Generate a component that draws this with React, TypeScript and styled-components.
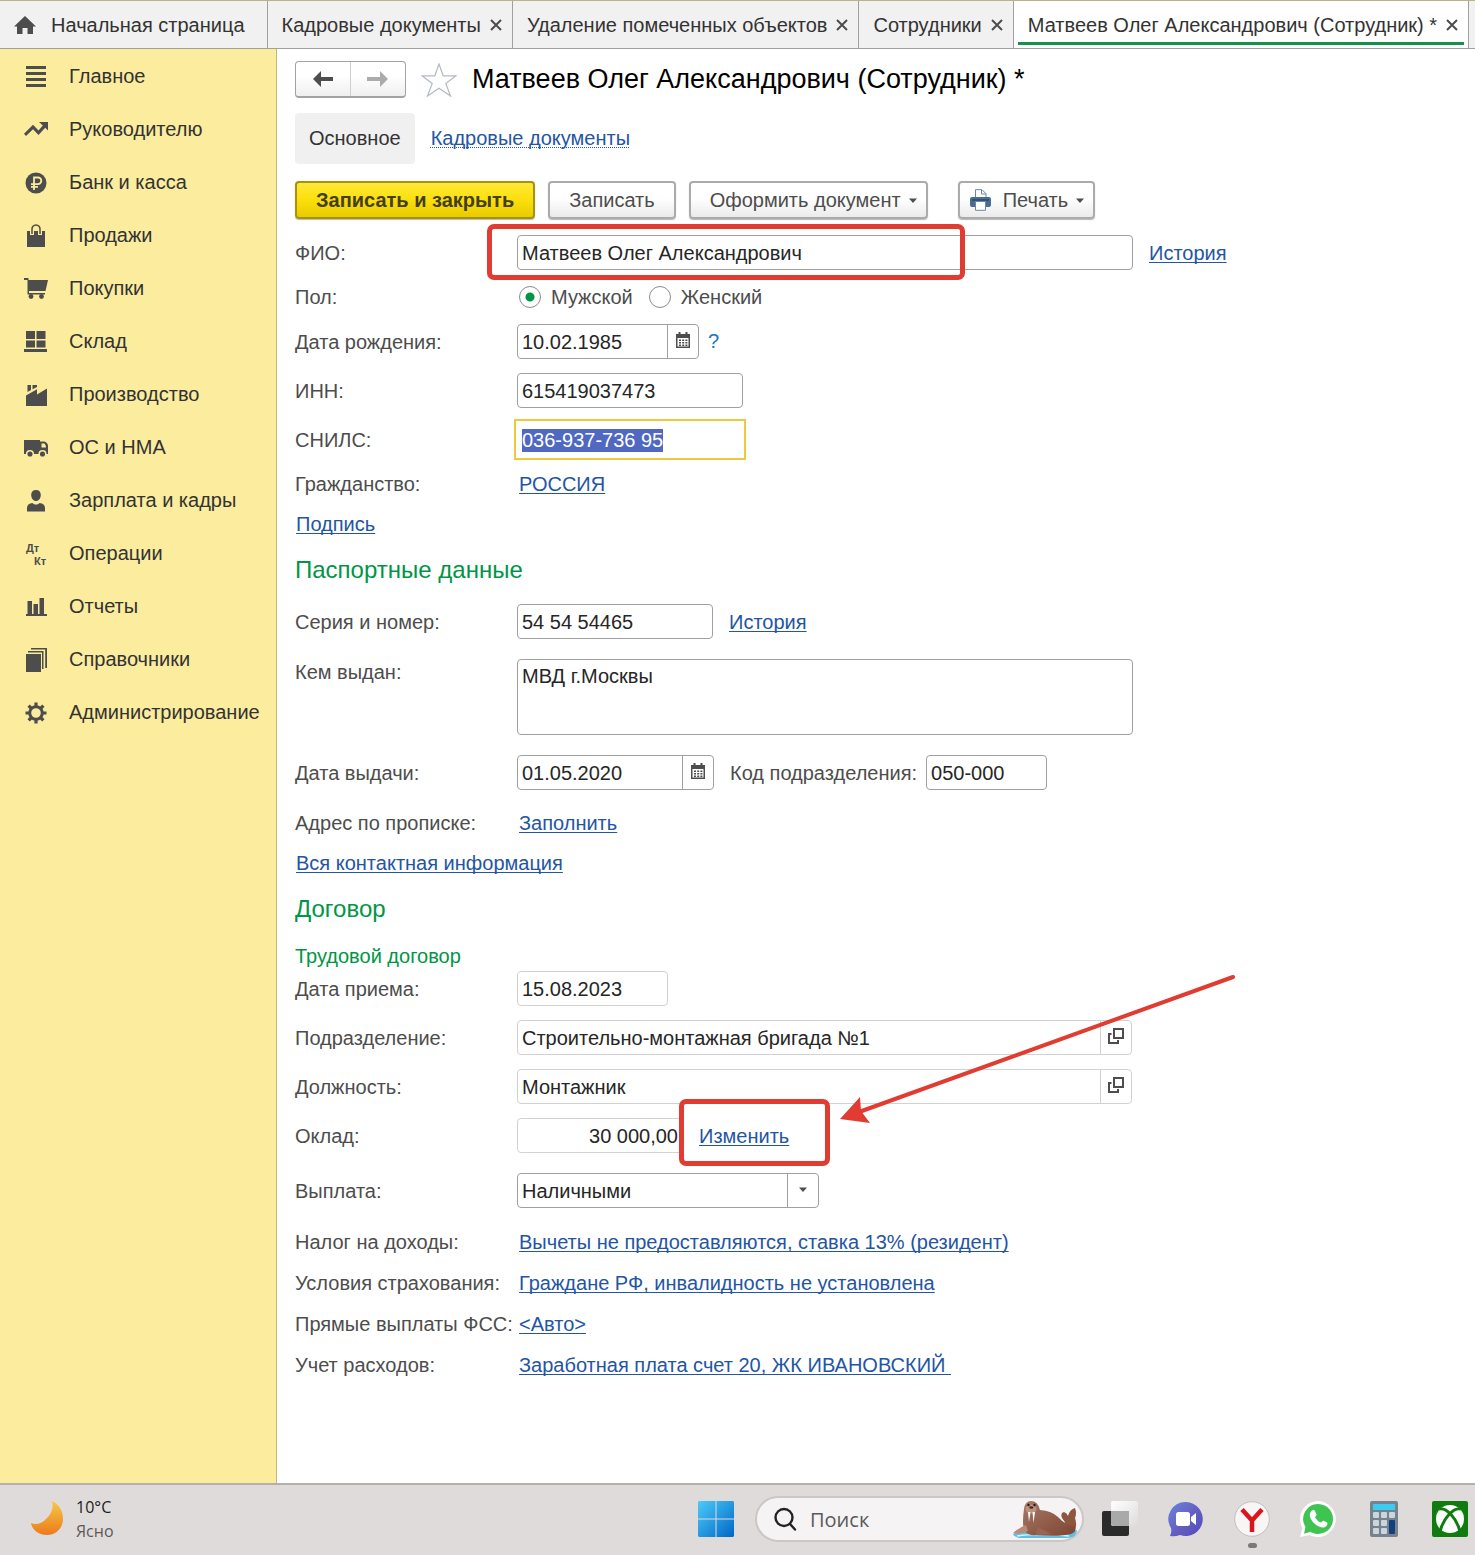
import React, { useEffect, useRef } from "react";
import styled, { createGlobalStyle, css } from "styled-components";

const ink = "#4d4d4d";
const red = "#e03c31";
const green = "#009646";

const GlobalStyle = createGlobalStyle`
  *, *::before, *::after { box-sizing: border-box; }
  body { margin: 0; background: #fff; }
  body, button, input, textarea, select {
    font-family: "Liberation Sans", Arial, sans-serif;
    font-size: 20px;
  }
  svg { display: block; flex: none; }
`;

const Page = styled.div`
  display: flex;
  flex-direction: column;
  min-height: 100vh;
  color: ${ink};
`;

/* ---------- window tabs ---------- */

const TabBar = styled.nav`
  display: flex;
  height: 49px;
  border-top: 1px solid #bdb57c;
  border-bottom: 1px solid #a0a0a0;
  background: #f1f1f1;
  overflow: hidden;
`;

const Tab = styled.div<{ $active?: boolean }>`
  position: relative;
  display: flex;
  align-items: center;
  gap: 9px;
  padding: 1px 10px 0 14px;
  border-right: 1px solid #a0a0a0;
  white-space: nowrap;
  ${(p) =>
    p.$active &&
    css`
      background: #fff;
      &::after {
        content: "";
        position: absolute;
        left: 4px;
        right: 4px;
        bottom: 3px;
        height: 3px;
        background: #15904f;
      }
    `}
`;

const TabLabel = styled.button<{ $home?: boolean }>`
  display: flex;
  align-items: center;
  gap: 15px;
  padding: ${(p) => (p.$home ? "0 12px 0 0" : "0")};
  border: 0;
  background: none;
  color: #333;
  white-space: nowrap;
`;

const TabClose = styled.button`
  padding: 0;
  border: 0;
  background: none;
  color: #444;
`;

/* ---------- sections ---------- */

const Body = styled.div`
  display: flex;
  flex: 1;
`;

const Sidebar = styled.nav`
  flex: none;
  width: 277px;
  padding-top: 1px;
  border-right: 1px solid #c2b878;
  background: #fbec9e;
`;

const SectionLink = styled.a`
  display: flex;
  align-items: center;
  gap: 21px;
  height: 53px;
  padding-left: 24px;
  color: #333;
  text-decoration: none;
`;

/* ---------- main panel ---------- */

const Main = styled.main`
  flex: 1;
  min-width: 0;
  padding: 12px 18px 40px;
`;

const Header = styled.header`
  display: flex;
  align-items: center;
  gap: 15px;
  height: 37px;
`;

const NavPair = styled.div`
  display: flex;
  width: 111px;
  height: 37px;
  border: 1px solid #a3a3a3;
  border-bottom-width: 2px;
  border-radius: 4px;
  background: linear-gradient(#fff 40%, #efefef);
`;

const NavButton = styled.button`
  display: grid;
  flex: 1;
  place-items: center;
  padding: 0;
  border: 0;
  background: none;
  & + & { border-left: 1px solid #cfcfcf; }
`;

const StarButton = styled.button`
  padding: 0;
  border: 0;
  background: none;
`;

const Title = styled.h1`
  margin: 0;
  color: #000;
  font-size: 27px;
  font-weight: 400;
  white-space: nowrap;
`;

const SubTabs = styled.div`
  display: flex;
  align-items: center;
  gap: 16px;
  margin-top: 15px;
`;

const SubTab = styled.button`
  height: 51px;
  padding: 0 14px;
  border: 0;
  border-radius: 4px;
  background: #f0f0f0;
  color: #333;
`;

const Link = styled.a<{ $dotted?: boolean }>`
  color: #2455a4;
  white-space: pre;
  text-decoration: underline ${(p) => (p.$dotted ? "dotted" : "solid")} 1px;
  text-underline-offset: 2px;
  text-decoration-skip-ink: none;
`;

const Toolbar = styled.div`
  display: flex;
  gap: 13px;
  margin-top: 17px;
`;

const Command = styled.button<{ $primary?: boolean; $menu?: boolean; $icon?: boolean; $apart?: boolean }>`
  display: flex;
  align-items: center;
  gap: 8px;
  height: 38px;
  margin-left: ${(p) => (p.$apart ? "17px" : "0")};
  padding: 0 ${(p) => (p.$menu ? "9px" : "19px")} 0 ${(p) => (p.$icon ? "10px" : "19px")};
  border: 2px solid ${(p) => (p.$primary ? "#a6920c" : "#ababab")};
  border-radius: 4px;
  background: ${(p) => (p.$primary ? "linear-gradient(#ffe83a, #fbdf0c 50%, #e8cb00)" : "linear-gradient(#fff 45%, #ebebeb)")};
  box-shadow: 0 1px 1px #b9b9b9;
  color: ${(p) => (p.$primary ? "#443f1a" : ink)};
  font-weight: ${(p) => (p.$primary ? 700 : 400)};
  white-space: nowrap;
  & > svg:first-child { margin-right: 4px; }
`;

/* ---------- form ---------- */

const Form = styled.form`
  display: flex;
  flex-direction: column;
  gap: 14px;
  margin-top: 16px;
`;

const Stack = styled.div<{ $gap: number; $apart?: boolean }>`
  display: flex;
  flex-direction: column;
  gap: ${(p) => p.$gap}px;
  margin-top: ${(p) => (p.$apart ? "7px" : "0")};
`;

const Row = styled.div<{ $apart?: boolean; $top?: boolean }>`
  display: grid;
  grid-template-columns: 222px minmax(0, 1fr);
  align-items: ${(p) => (p.$top ? "start" : "center")};
  margin-top: ${(p) => (p.$apart ? "6px" : "0")};
  line-height: 26px;
`;

const Label = styled.label`
  white-space: nowrap;
`;

const Controls = styled.div<{ $text?: boolean }>`
  display: flex;
  align-items: center;
  gap: 16px;
  padding-left: ${(p) => (p.$text ? "2px" : "0")};
`;

const Line = styled.div`
  padding-left: 1px;
  line-height: 26px;
`;

const Heading = styled.h2`
  margin: 0;
  padding-bottom: 1px;
  color: ${green};
  font-size: 24px;
  font-weight: 400;
  line-height: 38px;
`;

const SubHeading = styled.h3`
  margin: 0;
  color: ${green};
  font-size: 20px;
  font-weight: 400;
  line-height: 26px;
`;

const Field = styled.div<{ $width: number; $quiet?: boolean; $active?: boolean }>`
  position: relative;
  display: flex;
  flex: 0 1 auto;
  width: ${(p) => p.$width}px;
  min-width: 0;
  height: 35px;
  border: 1px solid ${(p) => (p.$active ? "#fff" : p.$quiet ? "#d2d2d2" : "#a0a0a0")};
  border-radius: 4px;
  background: #fff;
  ${(p) => p.$active && "border-radius: 0; outline: 2px solid #ecca3a; outline-offset: 1px;"}
`;

const inputText = css`
  flex: 1;
  min-width: 0;
  border: 0;
  outline: 0;
  background: none;
  color: #262626;
`;

const Input = styled.input<{ $right?: boolean }>`
  ${inputText}
  padding: 2px 4px 0;
  text-align: ${(p) => (p.$right ? "right" : "left")};
  &::selection { background: #5068c0; color: #fff; }
`;

const Select = styled.select`
  ${inputText}
  padding: 0 4px;
  appearance: none;
`;

const TextArea = styled.textarea`
  flex: 0 1 616px;
  min-width: 0;
  height: 76px;
  padding: 3px 4px;
  border: 1px solid #a0a0a0;
  border-radius: 4px;
  color: #262626;
  line-height: 26px;
  resize: none;
`;

const fieldEnd = css`
  display: grid;
  place-items: center;
  flex: none;
  width: 31px;
  padding: 0 0 3px;
  border: 0;
  border-left: 1px solid #a0a0a0;
  background: none;
`;

const FieldButton = styled.button<{ $quiet?: boolean }>`
  ${fieldEnd}
  border-color: ${(p) => (p.$quiet ? "#d2d2d2" : "#a0a0a0")};
`;

const SelectArrow = styled.span`
  ${fieldEnd}
`;

const Choice = styled.label`
  display: flex;
  align-items: center;
  gap: 10px;
`;

const Radio = styled.input`
  appearance: none;
  width: 22px;
  height: 22px;
  margin: 0;
  border: 1px solid #8c8c8c;
  border-radius: 50%;
  background: #fff;
  &:checked { background: radial-gradient(circle, ${green} 4px, #fff 5px); }
`;

const Pair = styled.div`
  display: flex;
  align-items: center;
  gap: 9px;
`;

const Help = styled.button`
  padding: 0;
  border: 0;
  background: none;
  color: #1876bd;
`;

/* ---------- marks drawn over the form ---------- */

const NameMark = styled.span`
  position: absolute;
  left: -31px;
  top: -12px;
  width: 478px;
  height: 56px;
  border: 5px solid ${red};
  border-radius: 7px;
  pointer-events: none;
`;

const Marked = styled.span`
  position: relative;
`;

const LinkMark = styled.span`
  position: absolute;
  left: -20px;
  top: -24px;
  width: 151px;
  height: 67px;
  border: 5px solid ${red};
  border-radius: 7px;
  pointer-events: none;
`;

const Arrow = styled.svg`
  position: absolute;
  left: 140px;
  top: -150px;
  pointer-events: none;
`;

/* ---------- taskbar ---------- */

const Taskbar = styled.footer`
  display: flex;
  align-items: center;
  height: 72px;
  padding: 0 7px 2px 30px;
  border-top: 2px solid #b5b0ae;
  background: #dfdbda;
  font-family: "Open Sans", sans-serif;
`;

const Weather = styled.div`
  display: flex;
  flex: 1;
  align-items: center;
  gap: 12px;
  font-size: 16px;
  line-height: 24px;
`;

const Degrees = styled.div`
  color: #1c1c1c;
`;

const Sky = styled.div`
  color: #5c5a59;
`;

const Search = styled.label`
  display: flex;
  align-items: center;
  gap: 13px;
  width: 329px;
  height: 46px;
  margin: 0 18px 0 21px;
  padding: 0 4px 0 16px;
  border: 2px solid #cbc7c6;
  border-radius: 23px;
  background: #f5f3f4;
`;

const SearchInput = styled.input`
  flex: 1;
  min-width: 0;
  padding: 0;
  border: 0;
  outline: 0;
  background: none;
  font-family: "Open Sans", sans-serif;
  &::placeholder { color: #5a5a5a; opacity: 1; }
`;

const Apps = styled.div`
  display: flex;
  gap: 30px;
`;

const AppButton = styled.button<{ $running?: boolean }>`
  position: relative;
  width: 36px;
  height: 36px;
  padding: 0;
  border: 0;
  background: none;
  ${(p) =>
    p.$running &&
    css`
      &::after {
        content: "";
        position: absolute;
        left: 14px;
        bottom: -11px;
        width: 9px;
        height: 5px;
        border-radius: 3px;
        background: #7b7877;
      }
    `}
`;

/* ---------- drawings ---------- */

const HomeIcon = () => (
  <svg width="22" height="18" viewBox="0 0 22 18" fill={ink}>
    <path d="M11 0 22 10.500h-3V18h-5.500v-6h-5v6H3v-7.500H0z" />
  </svg>
);

const CloseIcon = () => (
  <svg width="12" height="12" viewBox="0 0 12 12" stroke={ink} strokeWidth="2">
    <path d="M1 1l10 10M11 1L1 11" />
  </svg>
);

const sectionArt: Record<string, React.ReactNode> = {
  main: <path d="M2 1h20v3H2zM2 7h20v3H2zM2 13h20v3H2zM2 19h20v3H2z" />,
  chart: <path d="M15 4h9v8.500l-2.800-2.700-6.700 7.200-5.500-5.700L2 18 0 15.700 9 6.800l5.500 5.600 4.300-4.800z" />,
  bank: (
    <>
      <circle cx="12" cy="12" r="10.500" />
      <path d="M10 19V6.500h4a3.300 3.300 0 0 1 0 6.600H7M7 15.800h7" fill="none" stroke="#fbec9e" strokeWidth="1.800" />
    </>
  ),
  bag: (
    <>
      <path d="M3 7h18v16H3z" />
      <path d="M8 11V5a3 3 0 0 1 3-3h2a3 3 0 0 1 3 3v6" fill="none" stroke="#fbec9e" strokeWidth="4" />
      <path d="M8 10V5.500A4 4 0 0 1 12 1a4 4 0 0 1 4 4.500V10" fill="none" stroke={ink} strokeWidth="1.500" />
    </>
  ),
  cart: (
    <>
      <path d="M0 1h4.500v2H24l-2.500 11H5V16h16v1.500H3.500V3H0z" />
      <circle cx="7" cy="19.500" r="2.400" />
      <circle cx="17.500" cy="19.500" r="2.400" />
    </>
  ),
  stock: <path d="M2 1h9v8H2zM12.500 1h9v8h-9zM2 10.500h9v7H2zM12.500 10.500h9v7h-9zM0 19h23v3H0z" />,
  factory: <path d="M2 23V12.500l11-6.200v5.200l10-6V23zM3.500 2h3.500v5L3.500 9zM8.500 2H13v2L8.500 6.200z" />,
  truck: (
    <>
      <path d="M0 4h16v14H0z" />
      <path d="M16 5.500h4.500Q24 7 24 10v8h-8z" />
      <path d="M17.500 7.500h3q1.500 1.500 1.500 4h-4.500z" fill="#fbec9e" />
      <g stroke="#fbec9e" strokeWidth="1.500">
        <circle cx="6" cy="18" r="3.300" />
        <circle cx="18.500" cy="18" r="3.300" />
      </g>
    </>
  ),
  person: <path d="M12 1c3.200 0 5 2.300 4.800 5.200-.200 3-2 5.800-4.800 5.800S7.400 9.200 7.200 6.200C7 3.300 8.800 1 12 1zM3 22.500V19c0-3 2-4.800 5.500-5 2 2 5 2 7 0 3.500.200 5.500 2 5.500 5v3.500z" />,
  ledger: (
    <g fontFamily="Liberation Sans" fontWeight="700" fontSize="11">
      <text x="2" y="10">Дт</text>
      <text x="10" y="23">Кт</text>
    </g>
  ),
  bars: <path d="M2 19h1.500V6H8v13h1.500V9H14v10h1.500V3H20v16h3v2H2z" />,
  books: <path d="M2 6h15v18H2zM4 3h15.500v18H18V4.500H4zM7 0h16v20h-1.800V1.500H7z" />,
  gear: (
    <>
      <circle cx="12" cy="12" r="6.300" fill="none" stroke={ink} strokeWidth="3" />
      <g stroke={ink} strokeWidth="3.200">
        <path d="M12 1.500V5M12 19v3.500M1.500 12H5M19 12h3.500M4.600 4.600L7 7M17 17l2.400 2.400M4.600 19.400L7 17M17 7l2.400-2.400" />
      </g>
    </>
  ),
};

const SectionIcon = ({ name }: { name: string }) => (
  <svg width="24" height="24" viewBox="0 0 24 24" fill={ink}>
    {sectionArt[name]}
  </svg>
);

const ArrowIcon = ({ forward }: { forward?: boolean }) => (
  <svg width="22" height="16" viewBox="0 0 22 16" fill={forward ? "#ababab" : ink}>
    {forward ? <path d="M13 0l8 8-8 8v-6H0V6h13z" /> : <path d="M9 0v6h12v4H9v6L1 8z" />}
  </svg>
);

const StarIcon = () => (
  <svg width="36" height="34" viewBox="0 0 36 34" fill="#fff" stroke="#b5b9c2" strokeWidth="1.200">
    <path d="M18 1l4.200 11.800H35L24.800 20.400 29.500 33 18 25.200 6.500 33l4.700-12.600L1 12.800h12.800z" />
  </svg>
);

const Caret = () => (
  <svg width="8" height="5" viewBox="0 0 8 5" fill={ink}>
    <path d="M0 .500h8L4 5z" />
  </svg>
);

const PrinterIcon = () => (
  <svg width="21" height="22" viewBox="0 0 21 22">
    <path d="M5.500 10V.700h6.500l4 4V10" fill="#fff" stroke="#6b87a8" />
    <path d="M11.500.700V5H16" fill="none" stroke="#6b87a8" />
    <rect y="8" width="21" height="10" rx="2" fill="#4a6c93" />
    <path d="M2 11h17" stroke="#2e4a6d" strokeWidth="1.500" />
    <path d="M5.500 12.500h10v8.800h-10z" fill="#fff" stroke="#6b87a8" />
  </svg>
);

const CalendarIcon = () => (
  <svg width="14" height="16" viewBox="0 0 14 16">
    <path d="M2.500 0h2v2h5V0h2v2H14v14H0V2h2.500z" fill={ink} />
    <path d="M1.500 6h11v8.500h-11z" fill="#fff" />
    <path d="M3 8.200h8.500M3 10.700h8.500M3 13.200h8.500" stroke={ink} strokeWidth="1.500" strokeDasharray="2 1.200" />
  </svg>
);

const OpenIcon = () => (
  <svg width="16" height="16" viewBox="0 0 16 16" fill="none" stroke={ink} strokeWidth="2">
    <path d="M6 1h9v9H6zM3.500 6H1v9h9v-3" />
  </svg>
);

const MoonIcon = () => (
  <svg width="34" height="36" viewBox="0 0 34 36">
    <defs>
      <linearGradient id="moon" x1="0" y1="0" x2="0" y2="1">
        <stop offset="0" stopColor="#f6c945" />
        <stop offset="1" stopColor="#ec7a1c" />
      </linearGradient>
    </defs>
    <path d="M22 0C29 3 33 10 33 18c0 9-7 16-16 16C9 34 2 29 1 22c4 2 10 1 14-3 6-5 9-12 7-19z" fill="url(#moon)" />
  </svg>
);

const WindowsIcon = () => (
  <svg width="36" height="36" viewBox="0 0 36 36">
    <defs>
      <linearGradient id="win" x1="0" y1="0" x2="1" y2="1">
        <stop offset="0" stopColor="#4ccbfa" />
        <stop offset="1" stopColor="#0067c5" />
      </linearGradient>
    </defs>
    <path d="M1 0h16.500v17.500H0V1zM18.500 0H35l1 1v16.500H18.500zM0 18.500h17.500V36H1l-1-1zM18.500 18.500H36V35l-1 1H18.500z" fill="url(#win)" />
  </svg>
);

const SearchIcon = () => (
  <svg width="24" height="24" viewBox="0 0 24 24" fill="none" stroke="#222" strokeWidth="2.400" strokeLinecap="round">
    <circle cx="11" cy="10.500" r="8.500" />
    <path d="M17 17l5 5.500" />
  </svg>
);

const WalrusArt = () => (
  <svg width="66" height="38" viewBox="0 0 66 38">
    <defs>
      <linearGradient id="walrus" x1="0" y1="0" x2="1" y2="1">
        <stop offset="0" stopColor="#a77a68" />
        <stop offset="1" stopColor="#7c4430" />
      </linearGradient>
    </defs>
    <path d="M1 34q8-4 30-3t34-1q0 7-9 8H8q-6-1-7-4z" fill="#5cbfe6" />
    <path d="M5 36q20-3 52 0" stroke="#d4f1fb" strokeWidth="1.500" fill="none" />
    <path d="M54 26q-1-5-4-8-2-5 2-6 3 1 4 4 2-7 7-8 2 5 0 10 3 9-2 14z" fill="#8f563e" />
    <path d="M12 9q1-8 7-8 7 0 9 9 12 1 18 7 7 8 17 9 2 6-4 8-12 3-35 1-9 1-12-5-2-8 0-21z" fill="url(#walrus)" />
    <path d="M14 25q-8 3-13 8 8 2 15-2z" fill="#b98b76" />
    <path d="M26 27q-3 6-1 8 7 0 14-1" fill="#9a6450" />
    <ellipse cx="19" cy="9" rx="5.500" ry="4.500" fill="#bd9080" />
    <path d="M16 12l1 10 1.500-10zM20.500 12l1 11 1.500-11z" fill="#fff" />
    <circle cx="16.500" cy="5" r="1.200" fill="#221814" />
    <circle cx="22.500" cy="5" r="1.200" fill="#221814" />
    <ellipse cx="19.300" cy="7.500" rx="2" ry="1.200" fill="#4a2a22" />
  </svg>
);

const TaskViewIcon = () => (
  <svg width="36" height="36" viewBox="0 0 36 36">
    <defs>
      <linearGradient id="pane" x1="0" y1="0" x2="1" y2="1">
        <stop offset="0" stopColor="#fff" />
        <stop offset="1" stopColor="#dcdcdc" />
      </linearGradient>
    </defs>
    <rect y="10" width="27" height="25" rx="2" fill="#2b2b2b" />
    <rect x="9" y="0" width="27" height="25" rx="2" fill="url(#pane)" />
    <path d="M9 10h18v15H11l-2-2z" fill="#a9a9a9" />
  </svg>
);

const MeetIcon = () => (
  <svg width="36" height="36" viewBox="0 0 36 36">
    <defs>
      <linearGradient id="meet" x1="0" y1="0" x2="1" y2="1">
        <stop offset="0" stopColor="#6a86dd" />
        <stop offset="0.500" stopColor="#6660c2" />
        <stop offset="1" stopColor="#5049b8" />
      </linearGradient>
    </defs>
    <path d="M18 1a17 17 0 1 1-6 33q-5 2-10 1 2-4 1-8A17 17 0 0 1 18 1z" fill="url(#meet)" />
    <rect x="8" y="11" width="14" height="14" rx="2.500" fill="#fff" />
    <path d="M23 16l5-4v12l-5-4z" fill="#fff" />
  </svg>
);

const YandexIcon = () => (
  <svg width="36" height="36" viewBox="0 0 36 36">
    <circle cx="18" cy="18" r="17.300" fill="#f7f5f5" stroke="#c2bfbe" />
    <path d="M8 8.500l10 11 10-11M18 18v13" fill="none" stroke="#d9161c" strokeWidth="4.500" />
  </svg>
);

const WhatsAppIcon = () => (
  <svg width="36" height="36" viewBox="0 0 36 36">
    <path d="M18 0a18 18 0 1 1-8.500 34L0 36l2.500-9A18 18 0 0 1 18 0z" fill="#fff" />
    <path d="M18 3a15 15 0 1 1-7.500 28L4 32.500 5.500 26A15 15 0 0 1 18 3z" fill="#3fc351" />
    <path d="M12 9.500c1-1 2.500-.500 3 .500l1.500 3.500c.300 1-1 2-1.500 2.700 1.500 2.800 3.300 4.300 6 5.300.800-.500 1.500-2.200 2.600-1.800l3.600 1.900c.900 1.500-.700 4-2.700 4.700-5 1.500-13.500-5-14.700-11.300-.200-2.200.800-4.500 2.200-5.500z" fill="#fff" />
  </svg>
);

const CalculatorIcon = () => (
  <svg width="36" height="36" viewBox="0 0 36 36">
    <rect x="4" width="28" height="36" rx="2" fill="#76828c" />
    <rect x="7" y="3" width="22" height="6" fill="#3ccbf1" />
    <g fill="#cbd5dd">
      {[11, 19, 27].flatMap((y) =>
        [7, 15, 23].filter((x) => y === 11 || x < 23).map((x) => <rect key={`${x}-${y}`} x={x} y={y} width="6" height="6" rx="1" />)
      )}
    </g>
    <rect x="23" y="19" width="6" height="14" rx="1" fill="#143f7c" />
  </svg>
);

const XboxIcon = () => (
  <svg width="36" height="36" viewBox="0 0 36 36">
    <rect width="36" height="36" rx="2" fill="#107c10" />
    <circle cx="18" cy="18" r="14" fill="#fff" />
    <g fill="none" stroke="#107c10" strokeWidth="3">
      <path d="M7 8C14 6 25 17 28 31" />
      <path d="M29 8C22 6 11 17 8 31" />
    </g>
  </svg>
);

/* ---------- data ---------- */

const openTabs = ["Кадровые документы", "Удаление помеченных объектов", "Сотрудники", "Матвеев Олег Александрович (Сотрудник) *"];

const sections: [string, string][] = [
  ["main", "Главное"],
  ["chart", "Руководителю"],
  ["bank", "Банк и касса"],
  ["bag", "Продажи"],
  ["cart", "Покупки"],
  ["stock", "Склад"],
  ["factory", "Производство"],
  ["truck", "ОС и НМА"],
  ["person", "Зарплата и кадры"],
  ["ledger", "Операции"],
  ["bars", "Отчеты"],
  ["books", "Справочники"],
  ["gear", "Администрирование"],
];

const terms: [string, string][] = [
  ["Налог на доходы:", "Вычеты не предоставляются, ставка 13% (резидент)"],
  ["Условия страхования:", "Граждане РФ, инвалидность не установлена"],
  ["Прямые выплаты ФСС:", "<Авто>"],
  ["Учет расходов:", "Заработная плата счет 20, ЖК ИВАНОВСКИЙ "],
];

const apps: [string, () => React.ReactElement][] = [
  ["Представление задач", TaskViewIcon],
  ["Видеозвонки", MeetIcon],
  ["Яндекс", YandexIcon],
  ["WhatsApp", WhatsAppIcon],
  ["Калькулятор", CalculatorIcon],
  ["Xbox", XboxIcon],
];

export default function App() {
  const snils = useRef<HTMLInputElement>(null);

  useEffect(() => {
    snils.current?.focus();
    snils.current?.select();
  }, []);

  return (
    <Page>
      <GlobalStyle />
      <TabBar>
        <Tab>
          <TabLabel $home>
            <HomeIcon />
            Начальная страница
          </TabLabel>
        </Tab>
        {openTabs.map((name, i) => (
          <Tab key={name} $active={i === openTabs.length - 1}>
            <TabLabel>{name}</TabLabel>
            <TabClose aria-label="Закрыть">
              <CloseIcon />
            </TabClose>
          </Tab>
        ))}
      </TabBar>

      <Body>
        <Sidebar>
          {sections.map(([icon, name]) => (
            <SectionLink key={name} href="#">
              <SectionIcon name={icon} />
              {name}
            </SectionLink>
          ))}
        </Sidebar>

        <Main>
          <Header>
            <NavPair>
              <NavButton aria-label="Назад">
                <ArrowIcon />
              </NavButton>
              <NavButton aria-label="Вперед">
                <ArrowIcon forward />
              </NavButton>
            </NavPair>
            <StarButton aria-label="В избранное">
              <StarIcon />
            </StarButton>
            <Title>Матвеев Олег Александрович (Сотрудник) *</Title>
          </Header>

          <SubTabs>
            <SubTab>Основное</SubTab>
            <Link href="#" $dotted>Кадровые документы</Link>
          </SubTabs>

          <Toolbar>
            <Command $primary>Записать и закрыть</Command>
            <Command>Записать</Command>
            <Command $menu>
              <span>Оформить документ</span>
              <Caret />
            </Command>
            <Command $menu $icon $apart>
              <PrinterIcon />
              <span>Печать</span>
              <Caret />
            </Command>
          </Toolbar>

          <Form>
            <Row>
              <Label htmlFor="name">ФИО:</Label>
              <Controls>
                <Field $width={616}>
                  <Input id="name" defaultValue="Матвеев Олег Александрович" />
                  <NameMark />
                </Field>
                <Link href="#">История</Link>
              </Controls>
            </Row>
            <Row>
              <span>Пол:</span>
              <Controls $text>
                <Choice>
                  <Radio type="radio" name="sex" defaultChecked />
                  Мужской
                </Choice>
                <Choice>
                  <Radio type="radio" name="sex" />
                  Женский
                </Choice>
              </Controls>
            </Row>
            <Row>
              <Label htmlFor="born">Дата рождения:</Label>
              <Controls>
                <Pair>
                  <Field $width={182}>
                    <Input id="born" defaultValue="10.02.1985" />
                    <FieldButton type="button" aria-label="Выбрать дату">
                      <CalendarIcon />
                    </FieldButton>
                  </Field>
                  <Help type="button">?</Help>
                </Pair>
              </Controls>
            </Row>
            <Row>
              <Label htmlFor="inn">ИНН:</Label>
              <Controls>
                <Field $width={226}>
                  <Input id="inn" defaultValue="615419037473" />
                </Field>
              </Controls>
            </Row>
            <Row>
              <Label htmlFor="snils">СНИЛС:</Label>
              <Controls>
                <Field $width={226} $active>
                  <Input id="snils" ref={snils} defaultValue="036-937-736 95" />
                </Field>
              </Controls>
            </Row>
            <Row>
              <span>Гражданство:</span>
              <Controls $text>
                <Link href="#">РОССИЯ</Link>
              </Controls>
            </Row>
            <Line>
              <Link href="#">Подпись</Link>
            </Line>

            <Heading>Паспортные данные</Heading>
            <Row>
              <Label htmlFor="series">Серия и номер:</Label>
              <Controls>
                <Field $width={196}>
                  <Input id="series" defaultValue="54 54 54465" />
                </Field>
                <Link href="#">История</Link>
              </Controls>
            </Row>
            <Row $apart $top>
              <Label htmlFor="issuer">Кем выдан:</Label>
              <Controls>
                <TextArea id="issuer" defaultValue="МВД г.Москвы" />
              </Controls>
            </Row>
            <Row $apart>
              <Label htmlFor="issued">Дата выдачи:</Label>
              <Controls>
                <Field $width={197}>
                  <Input id="issued" defaultValue="01.05.2020" />
                  <FieldButton type="button" aria-label="Выбрать дату">
                    <CalendarIcon />
                  </FieldButton>
                </Field>
                <Pair>
                  <Label htmlFor="code">Код подразделения:</Label>
                  <Field $width={121}>
                    <Input id="code" defaultValue="050-000" />
                  </Field>
                </Pair>
              </Controls>
            </Row>
            <Row $apart>
              <span>Адрес по прописке:</span>
              <Controls $text>
                <Link href="#">Заполнить</Link>
              </Controls>
            </Row>
            <Line>
              <Link href="#">Вся контактная информация</Link>
            </Line>

            <Heading>Договор</Heading>
            <Stack $gap={2}>
              <SubHeading>Трудовой договор</SubHeading>
              <Row>
                <Label htmlFor="hired">Дата приема:</Label>
                <Controls>
                  <Field $width={151} $quiet>
                    <Input id="hired" readOnly value="15.08.2023" />
                  </Field>
                </Controls>
              </Row>
            </Stack>
            <Row>
              <Label htmlFor="unit">Подразделение:</Label>
              <Controls>
                <Field $width={615} $quiet>
                  <Input id="unit" readOnly value="Строительно-монтажная бригада №1" />
                  <FieldButton type="button" $quiet aria-label="Открыть">
                    <OpenIcon />
                  </FieldButton>
                </Field>
              </Controls>
            </Row>
            <Row>
              <Label htmlFor="post">Должность:</Label>
              <Controls>
                <Field $width={615} $quiet>
                  <Input id="post" readOnly value="Монтажник" />
                  <FieldButton type="button" $quiet aria-label="Открыть">
                    <OpenIcon />
                  </FieldButton>
                </Field>
              </Controls>
            </Row>
            <Row>
              <Label htmlFor="salary">Оклад:</Label>
              <Controls>
                <Field $width={166} $quiet>
                  <Input id="salary" $right readOnly value="30 000,00" />
                </Field>
                <Marked>
                  <Link href="#">Изменить</Link>
                  <LinkMark />
                  <Arrow width="398" height="160" viewBox="0 0 398 160">
                    <path d="M20 139L394 4" stroke={red} strokeWidth="4" strokeLinecap="round" />
                    <path d="M1 146L21 124l1 14 9 12z" fill={red} />
                  </Arrow>
                </Marked>
              </Controls>
            </Row>
            <Row $apart>
              <Label htmlFor="pay">Выплата:</Label>
              <Controls>
                <Field $width={302}>
                  <Select id="pay" defaultValue="cash">
                    <option value="cash">Наличными</option>
                  </Select>
                  <SelectArrow>
                    <Caret />
                  </SelectArrow>
                </Field>
              </Controls>
            </Row>
            <Stack $gap={15} $apart>
              {terms.map(([name, value]) => (
                <Row key={name}>
                  <span>{name}</span>
                  <Controls $text>
                    <Link href="#">{value}</Link>
                  </Controls>
                </Row>
              ))}
            </Stack>
          </Form>
        </Main>
      </Body>

      <Taskbar>
        <Weather>
          <MoonIcon />
          <div>
            <Degrees>10°C</Degrees>
            <Sky>Ясно</Sky>
          </div>
        </Weather>
        <AppButton aria-label="Пуск">
          <WindowsIcon />
        </AppButton>
        <Search>
          <SearchIcon />
          <SearchInput placeholder="Поиск" aria-label="Поиск" />
          <WalrusArt />
        </Search>
        <Apps>
          {apps.map(([name, Icon]) => (
            <AppButton key={name} aria-label={name} $running={name === "Яндекс"}>
              <Icon />
            </AppButton>
          ))}
        </Apps>
      </Taskbar>
    </Page>
  );
}
